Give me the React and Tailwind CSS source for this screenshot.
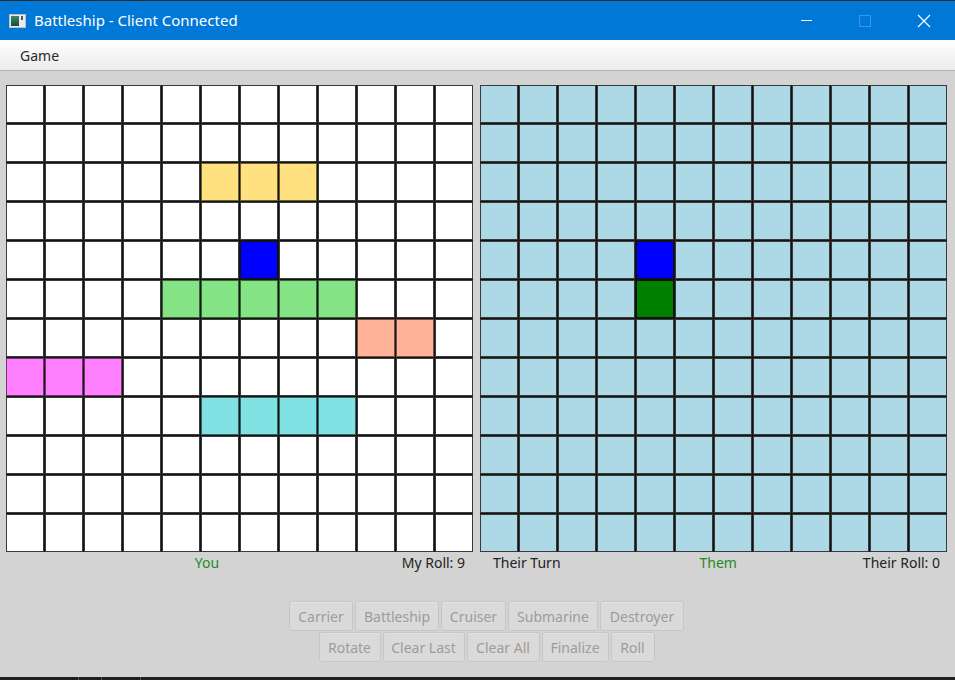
import React from "react";

const FONT = { fontFamily: '"Noto Sans", "Open Sans", Arial, sans-serif' };

const SHIP = {
  y: "bg-[#ffe17f] border-[#6e5f30]",
  g: "bg-[#84e384] border-[#356635]",
  s: "bg-[#ffb298] border-[#745044]",
  m: "bg-[#ff80ff] border-[#733573]",
  c: "bg-[#80e2e2] border-[#356666]",
  b: "bg-[#0000ff] border-[#111111]",
  d: "bg-[#008000] border-[#111111]",
};

const leftMarks = {
  "2-5": "y", "2-6": "y", "2-7": "y",
  "4-6": "b",
  "5-4": "g", "5-5": "g", "5-6": "g", "5-7": "g", "5-8": "g",
  "6-9": "s", "6-10": "s",
  "7-0": "m", "7-1": "m", "7-2": "m",
  "8-5": "c", "8-6": "c", "8-7": "c", "8-8": "c",
};
const rightMarks = { "4-4": "b", "5-4": "d" };

function Board({ marks, base }) {
  const cells = [];
  for (let r = 0; r < 12; r++) {
    for (let c = 0; c < 12; c++) {
      const k = marks[`${r}-${c}`];
      const cls = k ? SHIP[k] : base;
      cells.push(<div key={`${r}-${c}`} className={`h-[38px] border ${cls}`} />);
    }
  }
  return (
    <div className="grid grid-cols-[repeat(12,38px)] gap-px bg-[#141414] w-[467px]">
      {cells}
    </div>
  );
}

function Btn({ w, children }) {
  return (
    <div
      className={`${w} h-[30px] flex items-center justify-center rounded-[3px] border border-[#c6c6c6] bg-[#dadada] text-[#a09a98] text-[14px] shadow-[inset_0_1px_0_#e4e4e4]`}
    >
      {children}
    </div>
  );
}

export default function App() {
  return (
    <div className="w-[955px] h-[680px] flex flex-col bg-[#d3d3d3] overflow-hidden relative" style={FONT}>
      <div className="h-px bg-[#2b2b2b]" />
      {/* Title bar */}
      <div className="h-[39px] bg-[#0078d7] flex items-center text-white relative">
        <svg width="17" height="14" viewBox="0 0 17 14" className="ml-[9px]">
          <defs>
            <linearGradient id="ig" x1="0" y1="0" x2="0" y2="1">
              <stop offset="0" stopColor="#3c8a6c" />
              <stop offset="1" stopColor="#1c4a3c" />
            </linearGradient>
          </defs>
          <rect x="0.5" y="0.5" width="16" height="13" fill="#e8ecef" stroke="#b9c2c8" />
          <rect x="2" y="2" width="8" height="10" fill="url(#ig)" />
          <rect x="12" y="2" width="2" height="4" fill="#556" />
        </svg>
        <span className="ml-[8px] text-[15px] leading-none">Battleship - Client Connected</span>
        <div className="absolute left-[801px] top-[19px] w-[11px] h-px bg-white" />
        <div className="absolute left-[859px] top-[14px] w-[12px] h-[12px] border border-[#3d97e0]" />
        <svg className="absolute left-[917px] top-[13px]" width="14" height="14" viewBox="0 0 14 14">
          <path d="M1 1 L13 13 M13 1 L1 13" stroke="white" strokeWidth="1.2" />
        </svg>
      </div>
      {/* Menu bar */}
      <div className="h-[31px] bg-gradient-to-b from-[#ffffff] to-[#ececec] border-b border-[#b5b5b5] flex items-center">
        <span className="ml-[20px] text-[14px] text-[#2a2a2a]">Game</span>
      </div>
      {/* Boards */}
      <div className="flex gap-[7px] pl-[6px] pt-[14px]">
        <div className="flex flex-col">
          <Board marks={leftMarks} base="bg-white border-[#3a3a3a]" />
          <div className="h-[21px] flex items-center text-[14px] pl-[6px] pr-[8px]">
            <span />
            <div className="flex-1" />
            <span className="text-[#1e8a1e]">You</span>
            <div className="flex-1" />
            <span className="text-[#222]">My Roll: 9</span>
          </div>
        </div>
        <div className="flex flex-col">
          <Board marks={rightMarks} base="bg-[#add8e6] border-[#3a3a3a]" />
          <div className="h-[21px] flex items-center text-[14px] pl-[13px] pr-[7px]">
            <span className="text-[#222]">Their Turn</span>
            <div className="flex-1" />
            <span className="text-[#1e8a1e] ml-[13px]">Them</span>
            <div className="flex-1" />
            <span className="text-[#222]">Their Roll: 0</span>
          </div>
        </div>
      </div>
      {/* Buttons */}
      <div className="flex flex-col items-center gap-px mt-[28px] pl-[18px]">
        <div className="flex gap-[2px]">
          <Btn w="w-[64px]">Carrier</Btn>
          <Btn w="w-[84px]">Battleship</Btn>
          <Btn w="w-[65px]">Cruiser</Btn>
          <Btn w="w-[90px]">Submarine</Btn>
          <Btn w="w-[84px]">Destroyer</Btn>
        </div>
        <div className="flex gap-[2px]">
          <Btn w="w-[62px]">Rotate</Btn>
          <Btn w="w-[82px]">Clear Last</Btn>
          <Btn w="w-[73px]">Clear All</Btn>
          <Btn w="w-[67px]">Finalize</Btn>
          <Btn w="w-[44px]">Roll</Btn>
        </div>
      </div>
      <div className="flex-1" />
      <div className="h-[3px] bg-[#1f1f1f] flex">
        <div className="w-[78px]" />
        <div className="w-px bg-[#555]" />
        <div className="w-[22px]" />
        <div className="w-px bg-[#555]" />
        <div className="w-[38px]" />
        <div className="w-px bg-[#555]" />
      </div>
    </div>
  );
}
